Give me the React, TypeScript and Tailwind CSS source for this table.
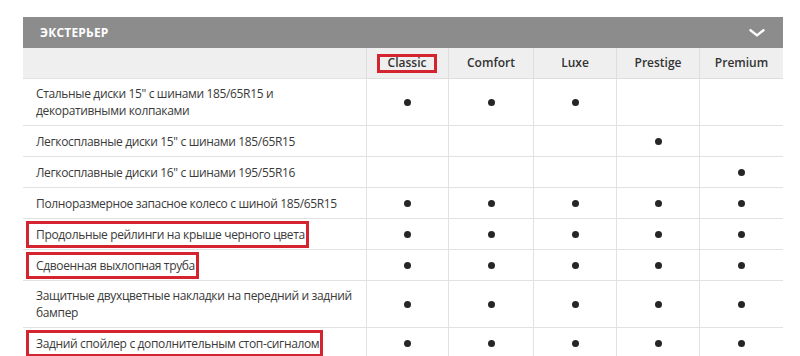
import React from 'react';

const trims = ['Classic', 'Comfort', 'Luxe', 'Prestige', 'Premium'];

type Row = { label: string; has: boolean[]; boxed?: boolean; tall?: boolean };

const rows: Row[] = [
  { label: 'Стальные диски 15" с шинами 185/65R15 и декоративными колпаками', has: [true, true, true, false, false], tall: true },
  { label: 'Легкосплавные диски 15" с шинами 185/65R15', has: [false, false, false, true, false] },
  { label: 'Легкосплавные диски 16" с шинами 195/55R16', has: [false, false, false, false, true] },
  { label: 'Полноразмерное запасное колесо с шиной 185/65R15', has: [true, true, true, true, true] },
  { label: 'Продольные рейлинги на крыше черного цвета', has: [true, true, true, true, true], boxed: true },
  { label: 'Сдвоенная выхлопная труба', has: [true, true, true, true, true], boxed: true },
  { label: 'Защитные двухцветные накладки на передний и задний бампер', has: [true, true, true, true, true], tall: true },
  { label: 'Задний спойлер с дополнительным стоп-сигналом', has: [true, true, true, true, true], boxed: true },
];

const Dot = () => <span className="block w-[7px] h-[7px] rounded-full bg-[#262626]" />;

export default function App() {
  return (
    <div className="w-[800px] h-[356px] overflow-hidden bg-white pl-[23px] pt-[17px] font-['Open_Sans',sans-serif] text-[#3a3a3a]">
      <div className="w-[760px]">
        <div className="h-[31px] bg-[#8c8c8c] flex items-center justify-between pl-[17px] pr-[18px]">
          <span className="text-white text-[12px] font-bold tracking-[0.2px]">ЭКСТЕРЬЕР</span>
          <svg width="16" height="8" viewBox="0 0 16 8" className="mt-[1px]">
            <path d="M1.5 1.2 L8 6.4 L14.5 1.2" fill="none" stroke="#fff" strokeWidth="2.4" strokeLinecap="round" strokeLinejoin="round" />
          </svg>
        </div>
        <div className="grid grid-cols-[343px_82px_85px_83px_83px_84px]">
          <div className="h-[31px] bg-[#efefef] border-b border-[#e2e2e2]" />
          {trims.map((t, i) => (
            <div key={t} className="h-[31px] bg-[#efefef] border-b border-l border-[#dedede] flex items-center justify-center text-[12px] font-semibold text-[#333]">
              {i === 0 ? (
                <span className="border-[3px] border-[#d42430] w-[60px] h-[19px] flex items-center justify-center ml-[-1px]">{t}</span>
              ) : (
                t
              )}
            </div>
          ))}
          {rows.map((r) => (
            <React.Fragment key={r.label}>
              <div className={`${r.tall ? 'h-[47px]' : 'h-[31px]'} border-b border-[#e2e2e2] flex items-center pl-[13px] pr-[8px] text-[12px] tracking-[-0.35px] leading-[17px]`}>
                {r.boxed ? (
                  <span className="border-[3px] border-[#d42430] ml-[-10px] pl-[7px] pr-[1px] h-[27px] flex items-center whitespace-nowrap">{r.label}</span>
                ) : (
                  <span>{r.label}</span>
                )}
              </div>
              {r.has.map((h, i) => (
                <div key={i} className={`${r.tall ? 'h-[47px]' : 'h-[31px]'} border-b border-l border-[#e2e2e2] flex items-center justify-center`}>
                  {h && <Dot />}
                </div>
              ))}
            </React.Fragment>
          ))}
        </div>
      </div>
    </div>
  );
}
